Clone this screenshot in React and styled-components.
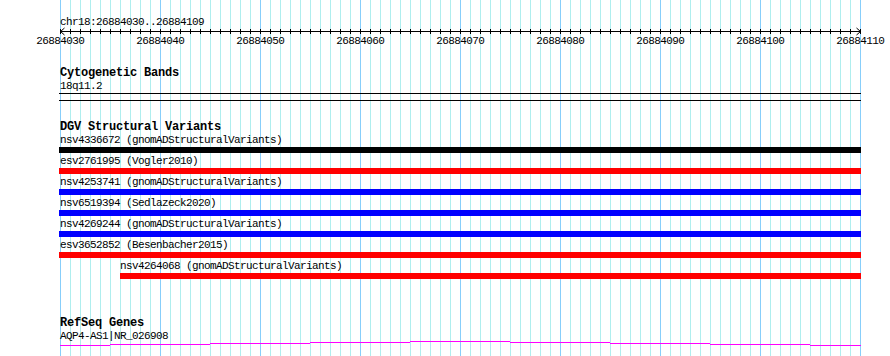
import React from 'react'

import styled, { createGlobalStyle, css } from 'styled-components'

const GlobalStyle = createGlobalStyle`
	html, body {
		margin: 0;
		padding: 0;
		background: #fff;
	}
`

// Grid colours
const MinorLine = '#afeeee'
const MajorLine = '#87cefa'

const Panel = styled.div`
	display: flex;
	flex-direction: column;
	width: 890px;
	height: 356px;
	overflow: hidden;
	background-color: #fff;
	background-image:
		repeating-linear-gradient(to right, ${MajorLine} 0 1px, transparent 1px 100px),
		repeating-linear-gradient(to right, ${MinorLine} 0 1px, transparent 1px 10px);
	background-position: 60px 0, 60px 0;
	background-size: 801px 100%, 801px 100%;
	background-repeat: no-repeat;
	font-family: 'Liberation Mono', 'DejaVu Sans Mono', monospace;
	color: #000;
`

const SmallText = css`
	font-size: 11px;
	letter-spacing: -0.6px;
	line-height: 13px;
	white-space: pre;
`

const RulerBlock = styled.div`
	display: flex;
	flex-direction: column;
	padding-top: 16px;
`

const RegionName = styled.div`
	${SmallText}
	padding-left: 60px;
`

const Scale = styled.svg`
	display: block;
	overflow: visible;
`

const Track = styled.section`
	display: flex;
	flex-direction: column;
	margin-top: ${props => props.$gap}px;
`

const TrackTitle = styled.div`
	font-size: 12px;
	font-weight: bold;
	letter-spacing: -0.2px;
	line-height: 13px;
	padding-left: 60px;
	white-space: pre;
`

const FeatureLabel = styled.div`
	${SmallText}
	padding-left: ${props => props.$start}px;
`

const Band = styled.div`
	box-sizing: border-box;
	margin-left: 59px;
	width: 802px;
	height: 8px;
	border-top: 1px solid #000;
	border-bottom: 1px solid #000;
`

const Variant = styled.div`
	display: flex;
	flex-direction: column;
	padding-bottom: 2px;
`

const Bar = styled.div`
	margin-left: ${props => props.$start}px;
	width: ${props => 861 - props.$start}px;
	height: 6px;
	background: ${props => props.$color};
`

const Variants = [
	{ id: 'nsv4336672', source: 'gnomADStructuralVariants', color: '#000000', start: 60 },
	{ id: 'esv2761995', source: 'Vogler2010', color: '#ff0000', start: 60 },
	{ id: 'nsv4253741', source: 'gnomADStructuralVariants', color: '#0000ff', start: 60 },
	{ id: 'nsv6519394', source: 'Sedlazeck2020', color: '#0000ff', start: 60 },
	{ id: 'nsv4269244', source: 'gnomADStructuralVariants', color: '#0000ff', start: 60 },
	{ id: 'esv3652852', source: 'Besenbacher2015', color: '#ff0000', start: 60 },
	{ id: 'nsv4264068', source: 'gnomADStructuralVariants', color: '#ff0000', start: 120 },
]

// Stepped intron line of the transcript: [from, to, y]
const GeneSteps = [
	[60, 110, 2],
	[110, 210, 1],
	[210, 310, 0],
	[310, 410, -1],
	[410, 510, -2],
	[510, 610, -1],
	[610, 710, 0],
	[710, 810, 1],
	[810, 861, 2],
]

const Ruler = () => {
	const ticks = []
	for (let x = 60; x <= 860; x += 10) ticks.push(x)

	const labels = []
	for (let i = 0; i <= 8; i++) labels.push({ x: 60 + i * 100, text: String(26884030 + i * 10) })

	return (
		<RulerBlock>
			<RegionName>chr18:26884030..26884109</RegionName>
			<Scale width='890' height='20' viewBox='0 0 890 20'>
				<rect x='60' y='2' width='800' height='1' fill='#000' shapeRendering='crispEdges' />
				{ticks.map(x => (
					<rect key={x} x={x} y='0' width='1' height='5' fill='#000' shapeRendering='crispEdges' />
				))}
				<path d='M64.5 -1 L60.5 2.5 L64.5 6' fill='none' stroke='#000' strokeWidth='1' />
				<path d='M856.5 -1 L860.5 2.5 L856.5 6' fill='none' stroke='#000' strokeWidth='1' />
				{labels.map(label => (
					<text
						key={label.x}
						x={label.x + 0.3}
						y='15'
						textAnchor='middle'
						fontFamily="'Liberation Mono', 'DejaVu Sans Mono', monospace"
						fontSize='11'
						letterSpacing='-0.6'
						fill='#000'
					>
						{label.text}
					</text>
				))}
			</Scale>
		</RulerBlock>
	)
}

const App = () => {
	return (
		<>
			<GlobalStyle />
			<Panel>
				<Ruler />

				<Track $gap={18}>
					<TrackTitle>Cytogenetic Bands</TrackTitle>
					<FeatureLabel $start={60}>18q11.2</FeatureLabel>
					<Band />
				</Track>

				<Track $gap={20}>
					<TrackTitle>DGV Structural Variants</TrackTitle>
					{Variants.map(variant => (
						<Variant key={variant.id}>
							<FeatureLabel $start={variant.start}>
								{variant.id} ({variant.source})
							</FeatureLabel>
							<Bar $start={variant.start === 60 ? 59 : variant.start} $color={variant.color} />
						</Variant>
					))}
				</Track>

				<Track $gap={36}>
					<TrackTitle>RefSeq Genes</TrackTitle>
					<FeatureLabel $start={60}>AQP4-AS1|NR_026908</FeatureLabel>
					<Scale width='890' height='13' viewBox='0 0 890 13'>
						{GeneSteps.map(([from, to, y]) => (
							<rect
								key={from}
								x={from}
								y={y}
								width={to - from}
								height='1'
								fill='#ff00ff'
								shapeRendering='crispEdges'
							/>
						))}
					</Scale>
				</Track>
			</Panel>
		</>
	)
}

export default App
